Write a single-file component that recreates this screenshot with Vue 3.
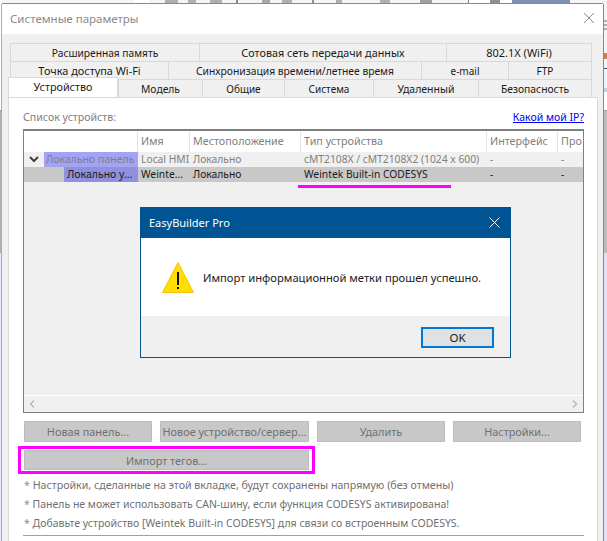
<script setup>
const tabRows = [
  [
    { t: 'Расширенная память', w: 189, fs: 10.2 },
    { t: 'Сотовая сеть передачи данных', w: 247, fs: 10.8 },
    { t: '802.1X (WiFi)', w: 146, fs: 11 },
  ],
  [
    { t: 'Точка доступа Wi-Fi', w: 158, fs: 10.9 },
    { t: 'Синхронизация времени/летнее время', w: 253, fs: 10.3 },
    { t: 'e-mail', w: 87, fs: 10 },
    { t: 'FTP', w: 84, fs: 10, shift: 10 },
  ],
]
const mainTabs = [
  { t: 'Устройство', w: 110, active: true, fs: 10.8 },
  { t: 'Модель', w: 84, fs: 10.3 },
  { t: 'Общие', w: 82, fs: 10 },
  { t: 'Система', w: 89, fs: 10 },
  { t: 'Удаленный', w: 105, fs: 10.5 },
  { t: 'Безопасность', w: 114, fs: 10.3 },
]
const columns = [
  { t: '', w: 114 },
  { t: 'Имя', w: 52 },
  { t: 'Местоположение', w: 111 },
  { t: 'Тип устройства', w: 186 },
  { t: 'Интерфейс', w: 71 },
  { t: 'Про', w: 24 },
]
const notes = [
  { t: 'Настройки, сделанные на этой вкладке, будут сохранены напрямую (без отмены)', fs: 10.65 },
  { t: 'Панель не может использовать CAN-шину, если функция CODESYS активирована!', fs: 10.5 },
  { t: 'Добавьте устройство [Weintek Built-in CODESYS] для связи со встроенным CODESYS.', fs: 10.5 },
]
</script>

<template>
  <div class="desk">
    <div class="window">
      <header class="titlebar">
        <span class="title">Системные параметры</span>
        <svg class="close" width="12" height="12" viewBox="0 0 12 12"><path d="M1 1l10 10M11 1L1 11" stroke="#8a8a8a" fill="none" /></svg>
      </header>
      <div class="body">
        <div class="tabs">
          <div v-for="(row, i) in tabRows" :key="i" class="tabrow">
            <div v-for="tab in row" :key="tab.t" class="tab" :style="{ width: tab.w + 'px', fontSize: tab.fs + 'px', paddingRight: (tab.shift || 0) + 'px' }">{{ tab.t }}</div>
          </div>
          <div class="tabrow">
            <div v-for="tab in mainTabs" :key="tab.t" class="tab" :class="{ active: tab.active }" :style="{ width: tab.w + 'px', fontSize: tab.fs + 'px' }">{{ tab.t }}</div>
          </div>
        </div>
        <section class="panel">
          <div class="listhead">
            <span class="listlabel">Список устройств:</span>
            <a class="iplink">Какой мой IP?</a>
          </div>
          <div class="list">
            <div class="cols">
              <div v-for="c in columns" :key="c.t" class="col" :style="{ width: c.w + 'px' }">{{ c.t }}</div>
            </div>
            <div class="row dim">
              <div class="tree c0">
                <svg class="chev" width="10" height="7" viewBox="0 0 10 7"><path d="M1 1l4 4 4-4" stroke="#404040" stroke-width="2" fill="none" /></svg>
                <span class="sel one">Локально панель</span>
              </div>
              <div class="cell c1">Local HMI</div>
              <div class="cell c2">Локально</div>
              <div class="cell c3">cMT2108X / cMT2108X2 (1024 x 600)</div>
              <div class="cell c4">-</div>
              <div class="cell c5">-</div>
            </div>
            <div class="row cur">
              <div class="tree c0">
                <span class="sel two">Локально у...</span>
              </div>
              <div class="cell c1">Weinte...</div>
              <div class="cell c2">Локально</div>
              <div class="cell c3 open"><span class="underlined">Weintek Built-in CODESYS</span></div>
              <div class="cell c4">-</div>
              <div class="cell c5">-</div>
            </div>
            <div class="listfill"></div>
            <div class="scroll">
              <svg width="6" height="8" viewBox="0 0 6 8"><path d="M5 0.5L1.5 4 5 7.5" stroke="#b8b8b8" stroke-width="1.4" fill="none" /></svg>
              <svg width="6" height="8" viewBox="0 0 6 8"><path d="M1 0.5L4.5 4 1 7.5" stroke="#b8b8b8" stroke-width="1.4" fill="none" /></svg>
            </div>
          </div>
          <div class="btnrow">
            <div class="btn b1">Новая панель...</div>
            <div class="btn b2">Новое устройство/сервер...</div>
            <div class="btn b1">Удалить</div>
            <div class="btn b1">Настройки...</div>
          </div>
          <div class="importbox">
            <div class="btn wide">Импорт тегов...</div>
          </div>
          <div class="notes">
            <p v-for="n in notes" :key="n.t" :style="{ fontSize: n.fs + 'px' }"><span class="star">*</span> {{ n.t }}</p>
          </div>
          <div class="rule"></div>
        </section>
      </div>

      <div class="dialog">
        <div class="dlgtitle">
          <span>EasyBuilder Pro</span>
          <svg width="11" height="11" viewBox="0 0 11 11"><path d="M0.5 0.5l10 10M10.5 0.5l-10 10" stroke="#fff" fill="none" /></svg>
        </div>
        <div class="dlgbody">
          <svg class="warn" width="34" height="33" viewBox="0 0 34 33">
            <path d="M17 1.5L32.5 31.5H1.5Z" fill="#ffde00" stroke="#f5c013" stroke-linejoin="round" />
            <rect x="16" y="11" width="2" height="13" fill="#111" />
            <rect x="16" y="26" width="2" height="2" fill="#111" />
          </svg>
          <span class="msg">Импорт информационной метки прошел успешно.</span>
        </div>
        <div class="dlgfoot">
          <div class="ok">OK</div>
        </div>
      </div>
    </div>
  </div>
</template>

<style>
html, body { margin: 0; background: #f4f4f4; overflow: hidden; }
</style>

<style scoped>
.desk {
  width: 607px;
  height: 541px;
  overflow: hidden;
  padding: 4px 4px 0 2px;
  box-sizing: border-box;
  font-family: "Noto Sans", Tahoma, sans-serif;
  font-size: 10.5px;
  color: #1a1a1a;
  background-color: #f4f4f4;
  background-repeat: no-repeat;
  background-image:
    linear-gradient(to bottom, #fff 0 110px, #909090 110px 111px, #b0b0b0 111px 253px, #e8e8f8 253px),
    linear-gradient(to bottom, #f4f4f4 0 20px, #b0b0b0 20px 22px, #f4f4f4 22px 24px, #b0b0b0 24px 26px, #f4f4f4 26px 28px, #b0b0b0 28px 30px, #f4f4f4 30px 53px, #c8804a 53px 59px, #f4f4f4 59px 68px, #1f5fa8 68px 69px, #eef2fb 69px 88px, #b4d4ee 88px 92px, #fff 92px 110px, #a0a0a0 110px 111px, #bcbcbc 111px 253px, #e2e2f6 253px),
    linear-gradient(to right, #f4f4f4 0 134px, #fff 134px 149px, #f4f4f4 149px 165px, #b0b0b0 165px 178px, #f4f4f4 178px 188px, #b0b0b0 188px 196px, #f4f4f4 196px 210px, #b0b0b0 210px 222px, #f4f4f4 222px 236px, #8a8a8a 236px 238px, #f4f4f4 238px 262px, #a8a8a8 262px 270px, #f4f4f4 270px 282px, #b0b0b0 282px 292px, #f4f4f4 292px 312px, #909090 312px 314px, #f4f4f4 314px 336px, #b0b0b0 336px 342px, #f4f4f4 342px 380px, #b0b0b0 380px 390px, #f4f4f4 390px 420px, #a0a0a0 420px 432px, #f4f4f4 432px 468px, #808080 468px 469px, #fff 469px 490px, #909090 490px 500px, #fff 500px 512px, #8090b0 512px 570px, #f4f4f4 570px);
  background-size: 2px 100%, 3px 100%, 100% 3px;
  background-position: 0 0, 604px 0, 0 0;
}
.window {
  position: relative;
  width: 601px;
  height: 537px;
  background: #f0f0f0;
  box-shadow: -1px 0 0 #a8a8c0, 0 -1px 0 #8a8a8a, 1px 0 0 #8a8a8a;
}
.titlebar {
  height: 30px;
  background: #fff;
  display: flex;
  align-items: center;
  justify-content: space-between;
  padding: 0 8px 2px 8px;
  box-sizing: border-box;
}
.title { font-size: 11.5px; color: #8a8a8a; }
.body { padding: 9px 8px 0 6px; }
.tabs { display: flex; flex-direction: column; padding-left: 2px; }
.tabrow { display: flex; height: 18px; }
.tab {
  box-sizing: border-box;
  border: 1px solid #d9d9d9;
  border-right-width: 0;
  border-bottom-width: 0;
  text-align: center;
  line-height: 18px;
  background: #f0f0f0;
  white-space: nowrap;
}
.tab:last-child { border-right-width: 1px; }
.tab.active {
  background: #fff;
  margin: -2px 0 0 -2px;
  height: 20px;
  position: relative;
  z-index: 2;
  border-bottom: 0;
  border-right-width: 1px;
  line-height: 18px;
}
.panel {
  background: #fff;
  border: 1px solid #d9d9d9;
  border-bottom: 0;
  height: 444px;
  box-sizing: border-box;
  padding: 0 13px 0 14px;
  position: relative;
  z-index: 1;
  margin-right: -3px;
}
.listhead {
  display: flex;
  justify-content: space-between;
  height: 31px;
  line-height: 38px;
  color: #808080;
}
.listlabel { font-size: 10.6px; }
.iplink { color: #0000ee; text-decoration: underline; font-size: 10.5px; }
.list {
  height: 284px;
  border: 1px solid #808080;
  border-top-width: 2px;
  box-sizing: border-box;
  background: #f0f0f0;
  display: flex;
  flex-direction: column;
}
.cols { display: flex; height: 21px; background: #fff; flex: none; }
.col {
  box-sizing: border-box;
  border-right: 1px solid #e4e4e4;
  color: #808080;
  padding-left: 3px;
  line-height: 20px;
  font-size: 10.75px;
  overflow: hidden;
  white-space: nowrap;
}
.col:last-child { border-right: 0; }
.row { display: flex; height: 15px; line-height: 14px; flex: none; white-space: nowrap; font-size: 10.3px; }
.row.dim { color: #808080; }
.row.cur { background: #c8c8c8; color: #1a1a1a; }
.c0 { width: 114px; }
.c1 { width: 52px; }
.c2 { width: 111px; }
.c3 { width: 186px; }
.c4 { width: 71px; }
.c5 { width: 24px; }
.tree { display: flex; align-items: center; box-sizing: border-box; position: relative; justify-content: flex-end; }
.chev { position: absolute; left: 5px; top: 4px; }
.sel { display: block; height: 15px; padding-left: 2px; box-sizing: border-box; font-size: 10.5px; }
.sel.one { width: 94px; background: #a3a3f5; }
.sel.two { width: 74px; padding-left: 3px; background: #9090e0; }
.cell { box-sizing: border-box; padding-left: 3px; overflow: hidden; }
.cell.open { overflow: visible; }
.underlined { position: relative; display: inline-block; }
.underlined::after {
  content: "";
  position: absolute;
  left: -6px;
  width: 153px;
  top: 18px;
  height: 3px;
  background: #ff00ff;
}
.listfill { flex: 1; border-bottom: 1px solid #fff; }
.scroll {
  flex: none;
  height: 16px;
  display: flex;
  align-items: center;
  justify-content: space-between;
  padding: 0 5px;
}
.btnrow { display: flex; gap: 8px; margin: 8px 0 0 1px; }
.btn {
  box-sizing: border-box;
  height: 21px;
  line-height: 20px;
  font-size: 10.9px;
  background: #c8c8c8;
  border: 1px solid #bcbcbc;
  color: #707070;
  text-align: center;
  white-space: nowrap;
}
.b1 { width: 128px; }
.b2 { width: 149px; }
.importbox {
  box-sizing: border-box;
  width: 297px;
  height: 28px;
  margin: 4px 0 0 -5px;
  border: 3px solid #ff00ff;
  padding: 1px 3px;
}
.btn.wide { width: 285px; height: 20px; }
.notes { margin: 2px 0 0 1px; color: #707070; }
.notes p { margin: 0; height: 19px; line-height: 19px; white-space: nowrap; }
.star { color: #909090; }
.rule { height: 1px; background: #a0a0a0; margin-top: 2px; }
.dialog {
  position: absolute;
  left: 138px;
  top: 203px;
  width: 371px;
  height: 151px;
  box-sizing: border-box;
  border: 1px solid #00558f;
  background: #f0f0f0;
  z-index: 5;
  display: flex;
  flex-direction: column;
}
.dlgtitle {
  flex: none;
  height: 30px;
  background: #005494;
  color: #fff;
  display: flex;
  align-items: center;
  justify-content: space-between;
  padding: 0 10px 1px 8px;
  box-sizing: border-box;
  font-size: 11px;
}
.dlgbody {
  flex: none;
  height: 78px;
  background: #fff;
  display: flex;
  align-items: center;
  padding-left: 20px;
  gap: 8px;
  box-sizing: border-box;
}
.warn { flex: none; }
.msg { font-size: 11.2px; color: #1a1a1a; }
.dlgfoot { flex: 1; display: flex; justify-content: flex-end; padding: 11px 16px 0 0; box-sizing: border-box; }
.ok {
  box-sizing: border-box;
  width: 73px;
  height: 21px;
  border: 2px solid #0078d7;
  background: #e1e1e1;
  text-align: center;
  line-height: 17px;
  font-size: 11.5px;
}
</style>
